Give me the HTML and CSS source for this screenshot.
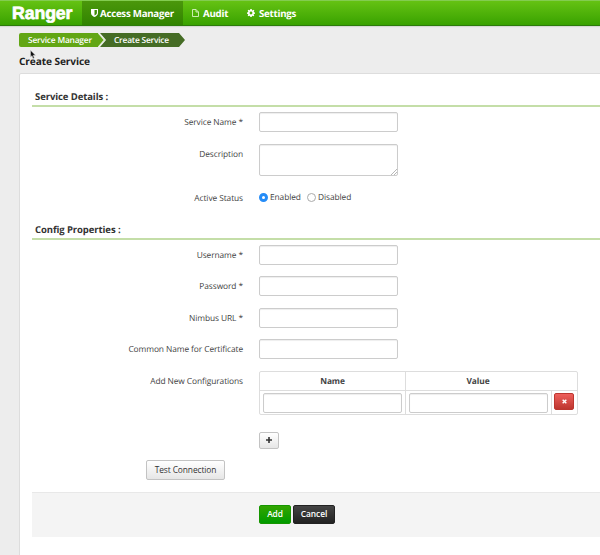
FILE: index.html
```html
<!DOCTYPE html>
<html lang="en">
<head>
<meta charset="utf-8">
<title>Ranger</title>
<link rel="stylesheet" href="styles.css">
</head>
<body>
<header class="navbar">
  <div class="brand">Ranger</div>
  <nav class="menu">
    <a class="item active"><svg class="shield" viewBox="0 0 14 16"><path fill="#fff" fill-rule="evenodd" d="M0 0H14V8C14 12 10 15 7 16C4 15 0 12 0 8ZM7 2.2V13.2C9.5 12 11.8 10 11.8 8V2.2Z"/></svg>Access Manager</a>
    <a class="item audit"><svg class="file" viewBox="0 0 14 16"><path fill="none" stroke="#d9f3c4" stroke-width="1.8" d="M1 1H8L13 6V15H1ZM8 1V6H13"/></svg>Audit</a>
    <a class="item settings"><svg class="cog" viewBox="0 0 16 16"><path fill="#fff" fill-rule="evenodd" d="M6.6 0H9.4L9.9 2.2L11.3 2.8L13.2 1.6L14.8 3.3L13.4 5.1L14 6.4L16 6.8V9.3L13.9 9.8L13.3 11.2L14.5 13L12.8 14.7L11 13.4L9.8 13.9L9.4 16H6.6L6.2 13.9L4.9 13.4L3.1 14.6L1.4 12.9L2.6 11.1L2.1 9.8L0 9.3V6.8L2.1 6.3L2.6 5L1.4 3.2L3.1 1.5L4.9 2.7L6.2 2.2ZM8 5.2A2.8 2.8 0 1 0 8 10.8A2.8 2.8 0 1 0 8 5.2Z"/></svg>Settings</a>
  </nav>
</header>
<div class="crumbs">
  <a class="crumb first">Service Manager</a><svg class="chevron" viewBox="0 0 8 14"><path fill="none" stroke="#e6eedf" stroke-width="1.3" d="M.5 0L6.5 7L.5 14"/></svg><a class="crumb last">Create Service</a>
  <svg class="pointer" viewBox="0 0 6 9"><path fill="#111" stroke="#ddd" stroke-width=".5" d="M.5.3V7L2 5.7L3 8.5L4.3 8L3.2 5.2H5.5Z"/></svg>
</div>
<h1>Create Service</h1>
<main class="panel">
  <h2>Service Details :</h2>
  <div class="row"><label>Service Name *</label><input class="field" type="text"></div>
  <div class="row tall"><label>Description</label><div class="field area"><svg class="grip" viewBox="0 0 6 6"><path fill="none" stroke="#999" stroke-width=".7" d="M0 6L6 0M3 6L6 3"/></svg></div></div>
  <div class="row status"><label>Active Status</label><div class="radios"><i class="radio on"></i><span class="enabled">Enabled</span><i class="radio"></i><span>Disabled</span></div></div>
  <h2 class="config">Config Properties :</h2>
  <div class="row"><label>Username *</label><input class="field" type="text"></div>
  <div class="row"><label>Password *</label><input class="field" type="text"></div>
  <div class="row"><label>Nimbus URL *</label><input class="field" type="text"></div>
  <div class="row"><label>Common Name for Certificate</label><input class="field" type="text"></div>
  <div class="row table-row"><label>Add New Configurations</label>
    <div class="table">
      <div class="th">Name</div><div class="th value">Value</div>
      <div class="td"><input class="field" type="text"></div>
      <div class="td"><input class="field" type="text"></div>
      <div class="td"><button class="remove"><svg viewBox="0 0 6 6"><path stroke="#fff" stroke-width="1.7" d="M.8.8L5.2 5.2M5.2.8L.8 5.2"/></svg></button></div>
    </div>
  </div>
  <button class="btn plus"><svg viewBox="0 0 6 6"><path stroke="#333" stroke-width="1.6" d="M3 0V6M0 3H6"/></svg></button>
  <button class="btn test">Test Connection</button>
  <footer class="actions"><button class="btn add">Add</button><button class="btn cancel">Cancel</button></footer>
</main>
</body>
</html>
```
FILE: styles.css
```css
* { box-sizing: border-box; }
body { margin: 0; width: 600px; height: 555px; overflow: hidden; background: #ededed; font: 8.4px/12px "Open Sans", sans-serif; letter-spacing: -.09px; color: #444; text-rendering: geometricPrecision; }
svg { display: block; flex: none; }
.navbar { display: flex; height: 26px; background: linear-gradient(#65c213, #39a200); border-top: 1px solid #83cc50; border-bottom: 1px solid #2c7b0b; box-shadow: 0 1px 1px #d5d9d3; }
.brand { width: 82px; padding-left: 12px; font: bold 17.7px/25px "Liberation Sans", sans-serif; color: #fff; -webkit-text-stroke: .7px #fff; }
.menu { display: flex; color: #fff; font-weight: 700; font-size: 9.7px; letter-spacing: -.25px; line-height: 25px; }
.item { display: flex; align-items: center; white-space: nowrap; }
.active { width: 101px; padding-left: 9px; background: linear-gradient(#4b970b, #318400); }
.shield { width: 7px; height: 8px; margin-right: 2px; }
.file { width: 7px; height: 8px; margin-right: 4px; }
.cog { width: 8px; height: 8px; margin-right: 4px; }
.audit { width: 55px; padding-left: 9px; }
.settings { padding-left: 9px; }
.crumbs { position: relative; display: flex; height: 14px; margin: 7px 0 0 19px; color: #fff; font-size: 8.4px; letter-spacing: -.2px; font-weight: 600; line-height: 15px; }
.crumb { height: 14px; white-space: nowrap; }
.first { width: 86px; padding-left: 9px; background: #62a615; border-radius: 2px 0 0 2px; clip-path: polygon(0 0, 79px 0, 100% 50%, 79px 100%, 0 100%); }
.chevron { width: 8px; height: 14px; margin-left: -7px; z-index: 1; }
.last { width: 85px; margin-left: -6px; padding-left: 14px; background: #456c25; clip-path: polygon(0 0, 79px 0, 100% 50%, 79px 100%, 0 100%, 6px 50%); }
.pointer { position: absolute; left: 11px; top: 17px; width: 6px; height: 9px; }
h1 { margin: 7px 0 5px 19px; font-size: 10.1px; line-height: 14px; font-weight: 700; color: #222; }
.panel { width: 590px; height: 490px; padding: 17px 0 0 12px; margin-left: 19px; background: #fff; border: 1px solid #ddd; border-radius: 2px 0 0 0; }
h2 { margin: 0 0 5px; padding-left: 3px; height: 16px; border-bottom: 2px solid #c4dea8; font-size: 9.5px; line-height: 11px; font-weight: 700; color: #333; }
.row { display: flex; height: 31.6px; }
label { width: 211px; margin-right: 16px; padding-top: 5px; text-align: right; white-space: nowrap; }
.field { display: block; width: 139px; height: 20px; margin: 0; padding: 0 4px; border: 1px solid #ccc; border-radius: 2px; background: #fff; box-shadow: inset 0 1px 1px #eee; }
.area { position: relative; height: 32px; }
.grip { position: absolute; right: 0; bottom: 0; width: 6px; height: 6px; }
.tall { height: 44px; }
.status { height: 36px; }
.radios { display: flex; align-items: center; height: 20px; }
.radio { width: 9px; height: 9px; margin-right: 2px; border: 1px solid #aaa; border-radius: 50%; background: #fff; }
.on { border: 3px solid #258cf7; }
.enabled { width: 37px; }
.config { margin-bottom: 5px; }
.table-row { height: 60.6px; }
.table { display: grid; width: 319px; height: 44px; grid-template-columns: 145px 146px 26px; grid-template-rows: 18px 24px; border: 1px solid #ddd; border-radius: 2px; }
.th { text-align: center; font-weight: 700; line-height: 19px; }
.value { grid-column: 2 / 4; padding-right: 27px; border-left: 1px solid #ddd; }
.td { padding: 2px 0 0 3px; border-top: 1px solid #ddd; }
.td + .td { border-left: 1px solid #ddd; }
.td:last-child { padding-left: 2px; }
.btn, .remove { display: flex; align-items: center; justify-content: center; padding: 0; border: 1px solid #c3c3c3; border-radius: 2px; background: linear-gradient(#fff, #e6e6e6); color: #333; font: inherit; letter-spacing: inherit; }
.remove { width: 20px; height: 17px; border-color: #bd362f; background: linear-gradient(#ee5f5b, #bd362f); }
.remove svg { width: 5px; height: 5px; }
.plus { width: 20px; height: 17px; margin-left: 227px; }
.plus svg { width: 6px; height: 6px; }
.test { width: 79px; height: 20px; margin: 11px 0 12px 114px; }
.actions { display: flex; gap: 2px; height: 45px; padding: 12px 0 0 227px; border-top: 1px solid #e8e8e8; background: #f4f4f4; }
.add, .cancel { height: 19px; color: #fff; font-weight: 600; }
.add { width: 32px; border-color: #169600; background: linear-gradient(#33a500, #009b00); }
.cancel { width: 42px; border-color: #222; background: linear-gradient(#444, #222); }
```
